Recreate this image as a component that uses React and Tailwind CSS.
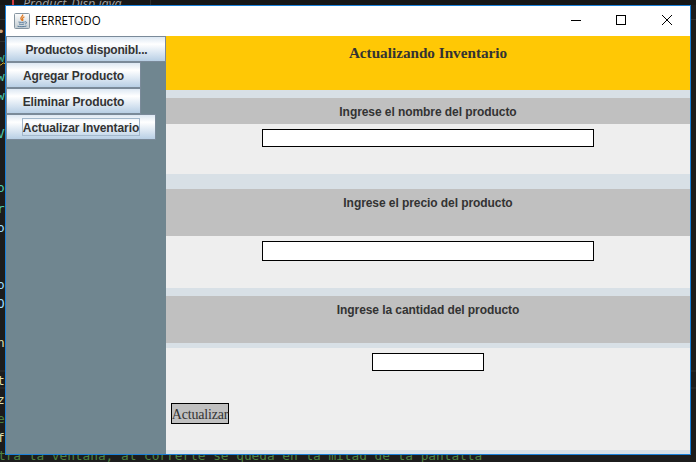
const gutter = [
  { ch: "•", y: 22, color: "text-[#c8a27a]" },
  { ch: "w", y: 48, color: "text-[#3fae94]" },
  { ch: "w", y: 67, color: "text-[#4ec9b0]" },
  { ch: "w", y: 86, color: "text-[#4ec9b0]" },
  { ch: "V", y: 124, color: "text-[#4ec9b0]" },
  { ch: "o", y: 178, color: "text-[#4ec9b0]" },
  { ch: "r", y: 199, color: "text-[#4ec9b0]" },
  { ch: "o", y: 218, color: "text-[#9cdcfe]" },
  { ch: "o", y: 275, color: "text-[#9cdcfe]" },
  { ch: "O", y: 294, color: "text-[#9cdcfe]" },
  { ch: "n", y: 333, color: "text-[#dcdcaa]" },
  { ch: "t", y: 371, color: "text-[#dcdcaa]" },
  { ch: "z", y: 390, color: "text-[#dcdcaa]" },
  { ch: "e", y: 409, color: "text-[#4f8040]" },
  { ch: "f", y: 428, color: "text-[#dcdcaa]" },
];

function Editor() {
  return (
    <div className="absolute inset-0 bg-[#1c1c1c] font-['DejaVu_Sans_Mono',monospace] text-[12.8px] leading-[19px] whitespace-pre">
      <div className="h-[5px] bg-[#171717]" />
      <div className="absolute left-[12px] top-0 h-[5px] w-[2px] bg-[#cc3e44]" />
      <div className="absolute left-[23px] top-[-6px] font-['Open_Sans',sans-serif] text-[12.5px] italic text-[#a0a0a0]">
        Product_Disp.java
      </div>
      <div className="absolute left-[150px] top-0 h-[5px] w-px bg-[#2c2c2c]" />
      <div className="absolute right-0 top-[19px] h-px w-[5px] bg-[#303030]" />
      <div className="absolute left-0 top-[19px] h-[23px] w-[5px] border-y border-[#303030]" />
      <div className="absolute right-0 top-[370px] h-[19px] w-[5px] border-y-2 border-[#262626]" />
      <div className="absolute left-0 top-[370px] h-[19px] w-[5px] border-y-2 border-[#262626]" />
      {gutter.map((g) => (
        <span key={g.y} className={"absolute left-[-3px] " + g.color} style={{ top: g.y }}>
          {g.ch}
        </span>
      ))}
      <svg className="absolute left-0 top-[62px]" width="5" height="4" viewBox="0 0 5 4" fill="none" stroke="#c8a020">
        <path d="M0 3h1l2-2h1l1 1" />
      </svg>
      <div className="absolute left-[-2px] top-[446px] tracking-[-0.02px] text-[#4f8040]">
        tra la ventana, al correrle se queda en la mitad de la pantalla
      </div>
    </div>
  );
}

function JavaIcon() {
  return (
    <svg width="16" height="16" viewBox="0 0 16 16" fill="none">
      <defs>
        <linearGradient id="cup-bg" x1="0" y1="0" x2="0" y2="1">
          <stop offset="0" stopColor="#fdfdfd" />
          <stop offset="1" stopColor="#c2ccd2" />
        </linearGradient>
      </defs>
      <rect x=".5" y=".5" width="15" height="15" rx="1" fill="url(#cup-bg)" stroke="#8594a0" />
      <path d="M8.6 1.5c1 1.6-2.4 2.5-1.7 4.2.3.8 1.3 1.2 1.3 2.2M10.4 3.8c-1.5.8-2.3 1.4-1.7 2.3.5.7.2 1.2-.3 1.7" stroke="#e07820" strokeWidth="1.3" />
      <path d="M4.5 9c1.8.5 4.3.5 6.2 0M5 11c1.7.5 3.5.5 5.2 0M11 8.8c2-.4 2 1.6.2 2.3M3.5 13.2c2.2.7 6.500.7 9-.2" stroke="#4a6f92" strokeWidth=".9" />
    </svg>
  );
}

function TitleBar() {
  return (
    <div className="flex h-[30px] shrink-0 items-center bg-white pl-2">
      <div className="-mt-px">
        <JavaIcon />
      </div>
      <span className="ml-[5px] origin-left scale-x-[0.96] font-['Open_Sans',sans-serif] text-[12px] font-normal leading-4 text-black">
        FERRETODO
      </span>
      <svg className="ml-auto mr-[17px] shrink-0" width="102" height="12" viewBox="0 0 102 12" fill="none" stroke="#000" shapeRendering="crispEdges">
        <path d="M0 5.5h10M45.5 .5h9v9h-9z" />
        <path d="M91 0l10 10M101 0l-10 10" shapeRendering="auto" />
      </svg>
    </div>
  );
}

function SideButton({ children, width, pad, text, focused }) {
  return (
    <button
      className={
        "flex h-[26px] items-center border border-[#7a8a99] bg-linear-to-b from-[#dde8f3] via-white via-30% to-[#b8cfe5] text-left whitespace-nowrap " +
        width + " " + pad
      }
    >
      <span
        className={
          "flex h-[18px] items-center justify-center border pt-[2px] leading-4 " + text +
          (focused ? " border-[#a3b8cc]" : " border-transparent")
        }
      >
        {children}
      </span>
    </button>
  );
}

function Caption({ children, height }) {
  return (
    <div className={"shrink-0 bg-[#c0c0c0] pt-[6px] text-center leading-4 tracking-[-0.07px] " + height}>{children}</div>
  );
}

export default function App() {
  return (
    <div className="relative h-[462px] w-[696px] overflow-hidden">
      <Editor />
      <div className="absolute left-[5px] top-[5px] flex h-[450px] w-[686px] flex-col border border-[#1a80d8] font-['Liberation_Sans',Arial,sans-serif] text-[12px] font-bold text-[#333]">
        <TitleBar />
        <div className="flex min-h-0 flex-1">
          <nav className="flex w-[160px] shrink-0 flex-col items-start bg-[#708690]">
            <SideButton width="w-[160px]" pad="pl-[17px]" text="w-[125px] tracking-[-0.18px]">Productos disponibl...</SideButton>
            <SideButton width="w-[135px]" pad="pl-[15px]" text="w-[103px] tracking-[-0.05px]">Agregar Producto</SideButton>
            <SideButton width="w-[135px]" pad="pl-[15px]" text="w-[103px] tracking-[-0.1px]">Eliminar Producto</SideButton>
            <SideButton width="w-[150px]" pad="pl-[15px]" text="w-[118px] tracking-[-0.08px]" focused>Actualizar Inventario</SideButton>
          </nav>
          <main className="flex flex-1 flex-col bg-[#d8e0e6]">
            <h1 className="h-[54px] shrink-0 bg-[#ffc805] pt-[7px] text-center font-['Liberation_Serif',serif] text-[15.2px] leading-5">
              Actualizando Inventario
            </h1>
            <div className="h-2 shrink-0" />
            <Caption height="h-[26px]">Ingrese el nombre del producto</Caption>
            <div className="flex h-[50px] shrink-0 items-start justify-center bg-[#eee] pt-[5px]">
              <input className="h-[18px] w-[332px] border border-black bg-white" />
            </div>
            <div className="h-[15px] shrink-0" />
            <Caption height="h-[47px]">Ingrese el precio del producto</Caption>
            <div className="flex h-[52px] shrink-0 items-start justify-center bg-[#eee] pt-[5px]">
              <input className="h-[20px] w-[332px] border border-black bg-white" />
            </div>
            <div className="h-2 shrink-0" />
            <Caption height="h-[47px]">Ingrese la cantidad del producto</Caption>
            <div className="h-[5px] shrink-0" />
            <div className="flex h-[102px] shrink-0 flex-col bg-[#eee] pl-[5px] pt-[5px]">
              <input className="mr-[5px] h-[18px] w-[112px] self-center border border-black bg-white" />
              <button className="mt-8 flex h-[21px] w-[58px] items-center justify-center border border-black bg-[#c0c0c0] pt-[3px] font-['Liberation_Serif',serif] text-[14px] tracking-[-0.2px] font-normal leading-4">
                Actualizar
              </button>
            </div>
          </main>
        </div>
      </div>
    </div>
  );
}
